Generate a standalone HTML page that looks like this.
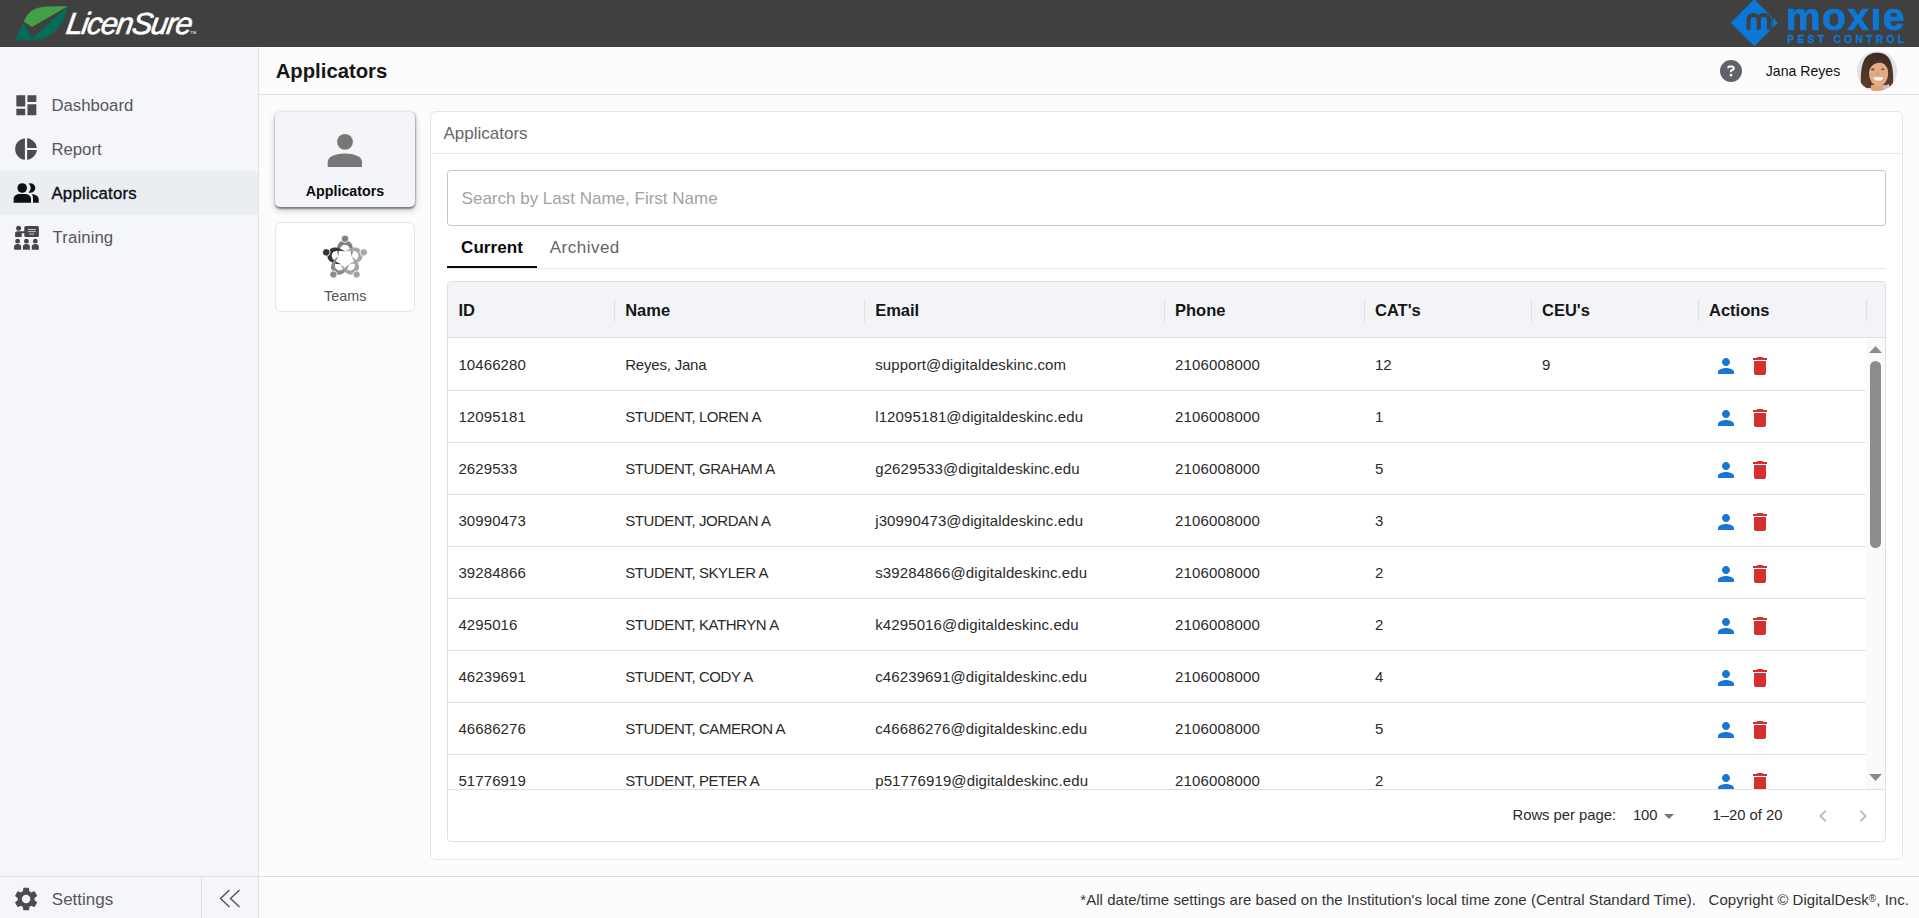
<!DOCTYPE html>
<html><head><meta charset="utf-8"><title>Applicators</title>
<style>
html,body{margin:0;padding:0}
body{width:1919px;height:918px;overflow:hidden;position:relative;background:#fcfcfc;font-family:"Liberation Sans",sans-serif}
.a{position:absolute}
.t{position:absolute;line-height:1;white-space:nowrap}
svg.a{overflow:visible}
</style></head><body>
<div class="a" style="left:0px;top:0px;width:1919px;height:47px;background:#404040"></div>
<svg class="a" style="left:0px;top:0px" width="260" height="46" viewBox="0 0 260 46">
<path d="M67.6 6.2 C52 6.2 42 6.3 36 8.5 C30 10.8 26 16 23.7 21.5 L32 27 Z" fill="#43a047"/>
<path d="M15 39.8 L23.5 22.6 L32.2 38.5 L67.6 6.4 C65 17 61 26 54 32 C47 38 40 39.7 35 39.7 Z" fill="#006e5a"/>
</svg>
<div class="t" style="left:65px;top:8.00px;font-size:30.5px;color:#fff;font-weight:normal;letter-spacing:-1.4px;font-style:italic;-webkit-text-stroke:0.6px #fff;transform:skewX(-9deg);transform-origin:0 26px;">LicenSure</div>
<div class="t" style="left:190.3px;top:31.00px;font-size:4.2px;color:#fff;font-weight:normal;letter-spacing:0px;">TM</div>
<svg class="a" style="left:1700px;top:0px" width="219" height="46" viewBox="1700 0 219 46">
<path d="M1754.3 -0.8 L1777.8 22.75 L1754.3 46.3 L1730.8 22.75 Z" fill="#0b78d8"/>
<path d="M1746.5 29.8 V20 C1746.5 15.5 1749.5 13 1753.5 13 C1755.5 13 1757.5 13.8 1758.6 15.2 C1759.8 13.8 1761.8 13 1764 13 C1768.2 13 1771 15.5 1771 20 V29.8 H1767 V20.5 C1767 18 1765.8 17 1764 17 C1762.2 17 1760.8 18 1760.8 20.5 V29.8 H1756.7 V20.5 C1756.7 18 1755.5 17 1753.7 17 C1751.9 17 1750.6 18 1750.6 20.5 V29.8 Z" fill="#404040"/>
<path d="M1771.5 16.5 L1772.8 16.5 L1772.8 29 L1771.5 30" fill="#404040"/>
</svg>
<div class="t" style="left:1786px;top:-3.00px;font-size:39px;color:#0b78d8;font-weight:bold;letter-spacing:1.5px;-webkit-text-stroke:0.7px #0b78d8;">mox&#x131;e</div>
<div class="t" style="left:1787.3px;top:35.00px;font-size:10.2px;color:#0b78d8;font-weight:bold;letter-spacing:3.35px;-webkit-text-stroke:0.3px #0b78d8;">PEST CONTROL</div>
<div class="a" style="left:0px;top:47px;width:258px;height:871px;background:#f5f6fa"></div>
<div class="a" style="left:0px;top:171px;width:258px;height:44px;background:#eaedf2;border-radius:4px"></div>
<svg class="a" style="left:12.7px;top:92px" width="26.7" height="26.7" viewBox="0 0 24 24"><path d="M3 13h8V3H3zm0 8h8v-6H3zm10 0h8V11h-8zm0-18v6h8V3z" fill="#4a4c52"/></svg>
<div class="t" style="left:51.4px;top:98.00px;font-size:16.75px;color:#55575c;font-weight:normal;letter-spacing:0px;">Dashboard</div>
<svg class="a" style="left:13.1px;top:135.6px" width="26" height="26" viewBox="0 0 24 24"><path d="M11 2v20c-5.07-.5-9-4.79-9-10s3.93-9.5 9-10m2.03 0v8.99H22c-.47-4.74-4.24-8.52-8.97-8.99m0 11.01V22c4.74-.47 8.5-4.25 8.97-8.99z" fill="#4a4c52"/></svg>
<div class="t" style="left:51.4px;top:142.00px;font-size:16.75px;color:#55575c;font-weight:normal;letter-spacing:0px;">Report</div>
<svg class="a" style="left:0px;top:170px" width="50" height="45" viewBox="0 170 50 45"><g fill="#0d0f14">
<circle cx="22.2" cy="188" r="4.8"/>
<path d="M28.6 183.6 A4.8 4.8 0 1 1 28.6 192.4 A5.6 5.6 0 0 0 28.6 183.6 Z"/>
<path d="M13.6 202.7 V199.2 C13.6 196.2 16 194.1 19.5 194.1 H25 C28.5 194.1 31 196.2 31 199.2 V202.7 Z"/>
<path d="M32.1 194.1 C36 194.6 38.7 196.6 38.7 199.2 V202.7 H33 V199.2 C33 197.2 32.7 195.5 32.1 194.1 Z"/>
</g></svg>
<div class="t" style="left:51.4px;top:186.00px;font-size:16.75px;color:#0d0f14;font-weight:normal;letter-spacing:0.25px;-webkit-text-stroke:0.35px #0d0f14;">Applicators</div>
<svg class="a" style="left:0px;top:215px" width="50" height="40" viewBox="0 215 50 40">
<g fill="#46464a">
<circle cx="18.6" cy="228.3" r="2.5"/>
<path d="M15.1 236.9 V233 C15.1 231.9 16 231.2 17.2 231.2 H26.8 V233.2 H21.7 V236.9 Z"/>
<rect x="24.3" y="226" width="14.6" height="11" rx="1.6"/>
<circle cx="17.6" cy="241.2" r="2.4"/><path d="M14.1 249.7 V246.3 C14.1 244.8 15.5 243.9 17.6 243.9 C19.7 243.9 21.1 244.8 21.1 246.3 V249.7 Z"/>
<circle cx="26.4" cy="241.2" r="2.4"/><path d="M22.9 249.7 V246.3 C22.9 244.8 24.3 243.9 26.4 243.9 C28.5 243.9 29.9 244.8 29.9 246.3 V249.7 Z"/>
<circle cx="35.3" cy="241.2" r="2.4"/><path d="M31.8 249.7 V246.3 C31.8 244.8 33.2 243.9 35.3 243.9 C37.4 243.9 38.8 244.8 38.8 246.3 V249.7 Z"/>
</g>
<rect x="28" y="229" width="7.8" height="0.9" fill="#d8d8dc"/>
<rect x="28" y="231.2" width="7.8" height="0.9" fill="#d8d8dc"/>
<rect x="29.2" y="233.3" width="4.8" height="1.6" fill="#9a9a9e"/>
</svg>
<div class="t" style="left:52.6px;top:230.00px;font-size:16.75px;color:#55575c;font-weight:normal;letter-spacing:0.1px;">Training</div>
<div class="a" style="left:0px;top:876px;width:1919px;height:1px;background:#dfdfdc"></div>
<div class="a" style="left:201px;top:877px;width:1px;height:41px;background:#e0e0e0"></div>
<div class="a" style="left:258px;top:47px;width:1px;height:871px;background:#dfe2ec"></div>
<svg class="a" style="left:11.8px;top:884.8px" width="28.2" height="28.2" viewBox="0 0 24 24"><path d="M19.14 12.94c.04-.3.06-.61.06-.94 0-.32-.02-.64-.07-.94l2.03-1.58c.18-.14.23-.41.12-.61l-1.92-3.32c-.12-.22-.37-.29-.59-.22l-2.39.96c-.5-.38-1.03-.7-1.62-.94l-.36-2.54c-.04-.24-.24-.41-.48-.41h-3.84c-.24 0-.43.17-.47.41l-.36 2.54c-.59.24-1.13.57-1.62.94l-2.39-.96c-.22-.08-.47 0-.59.22L2.74 8.87c-.12.21-.08.47.12.61l2.03 1.58c-.05.3-.09.63-.09.94s.02.64.07.94l-2.03 1.58c-.18.14-.23.41-.12.61l1.92 3.32c.12.22.37.29.59.22l2.39-.96c.5.38 1.03.7 1.62.94l.36 2.54c.05.24.24.41.48.41h3.84c.24 0 .44-.17.47-.41l.36-2.54c.59-.24 1.13-.56 1.62-.94l2.39.96c.22.08.47 0 .59-.22l1.92-3.32c.12-.22.07-.47-.12-.61zM12 15.6c-1.98 0-3.6-1.62-3.6-3.6s1.62-3.6 3.6-3.6 3.6 1.62 3.6 3.6-1.62 3.6-3.6 3.6" fill="#4a4c52"/></svg>
<div class="t" style="left:51.8px;top:891.00px;font-size:17px;color:#55575c;font-weight:normal;letter-spacing:0px;">Settings</div>
<svg class="a" style="left:215px;top:885px" width="30" height="26" viewBox="215 885 30 26">
<polyline points="229.5,890 220.5,898.5 229.5,907" fill="none" stroke="#55575c" stroke-width="1.5"/>
<polyline points="239.5,890 230.5,898.5 239.5,907" fill="none" stroke="#55575c" stroke-width="1.5"/>
</svg>
<div class="a" style="left:259px;top:94px;width:1660px;height:1px;background:#e0e0e0"></div>
<div class="t" style="left:275.7px;top:61.00px;font-size:20.3px;color:#161616;font-weight:bold;letter-spacing:0px;">Applicators</div>
<svg class="a" style="left:1720.3px;top:59.9px" width="22" height="22" viewBox="0 0 512 512"><path d="M256 512A256 256 0 1 0 256 0a256 256 0 1 0 0 512zM169.8 165.3c7.9-22.3 29.1-37.3 52.8-37.3h58.3c34.9 0 63.1 28.3 63.1 63.1c0 22.6-12.1 43.5-31.7 54.8L280 264.4c-.2 13-10.9 23.6-24 23.6c-13.3 0-24-10.7-24-24V250.5c0-8.6 4.6-16.5 12.1-20.8l44.3-25.4c4.7-2.7 7.6-7.7 7.6-13.1c0-8.4-6.8-15.100-15.1-15.1H222.6c-3.4 0-6.4 2.1-7.5 5.3l-.4 1.2c-4.4 12.5-18.2 19-30.6 14.6s-19-18.2-14.6-30.6l.4-1.2zM224 352a32 32 0 1 1 64 0 32 32 0 1 1 -64 0z" fill="#5f6368"/></svg>
<div class="t" style="left:1765.8px;top:64.00px;font-size:14.1px;color:#111;font-weight:normal;letter-spacing:0px;">Jana Reyes</div>
<svg class="a" style="left:1856px;top:50px" width="42" height="42" viewBox="0 0 42 42">
<defs><clipPath id="cc"><circle cx="21" cy="21" r="20"/></clipPath>
<linearGradient id="hg" x1="0" y1="0" x2="0" y2="1"><stop offset="0" stop-color="#3f2a24"/><stop offset="1" stop-color="#5e3e2c"/></linearGradient></defs>
<circle cx="21" cy="21" r="20" fill="#e3e3e3"/>
<g clip-path="url(#cc)">
<path d="M3 30 Q6 40 21 42 Q36 40 39 30 V42 H3Z" fill="#f8f8f8"/>
<path d="M5 34 C4.5 26 5 15 9 8.5 C12 4 17 2.8 21.5 2.8 C27 2.8 31.5 5 34 10 C37 16 37.5 26 37 34 C36 37 34 38 32 37 L13 38 C9 39 6 37 5 34Z" fill="url(#hg)"/>
<path d="M15 35 H30 V42 H15Z" fill="#e0a379"/>
<path d="M27 36 L33 34 L35 42 H27Z" fill="#b9c0d8"/>
<ellipse cx="22.6" cy="23.5" rx="9.6" ry="12.6" fill="#e4ab82"/>
<path d="M12.6 22 C12 13 15.5 8.5 22 8.5 C28.5 8.5 33 12 32.8 21 C31 15 27 12.5 23 12.8 C18 13 14.5 16 12.6 22Z" fill="#46302a"/>
<ellipse cx="16.8" cy="19.5" rx="1.7" ry="0.9" fill="#5b4652"/>
<ellipse cx="26.8" cy="19.3" rx="1.7" ry="0.9" fill="#5b4652"/>
<path d="M17.3 27.4 Q22.2 26.6 27.2 27.4 Q26.5 30.6 22.2 30.6 Q18 30.6 17.3 27.4Z" fill="#fbf4f0"/>
<path d="M21.5 21 L20.8 25 H23.5Z" fill="#d39a72"/>
</g>
</svg>
<div class="a" style="left:275px;top:111.5px;width:140px;height:95.5px;background:#f4f5f9;border-radius:5px;box-shadow:0 1.5px 2px rgba(0,0,0,0.4),0 3px 7px rgba(0,0,0,0.22),1px 0 2px rgba(0,0,0,0.15)"></div>
<svg class="a" style="left:320px;top:125px" width="50" height="50" viewBox="320 125 50 50"><circle cx="345" cy="141.8" r="7.9" fill="#777"/><path d="M327.7 167 V162 C327.7 156.5 336 153.6 345 153.6 C354 153.6 362 156.5 362 162 V167 Z" fill="#777"/></svg>
<div class="t" style="left:305.8px;top:184.00px;font-size:14.25px;color:#0a0a0a;font-weight:bold;letter-spacing:0px;">Applicators</div>
<div class="a" style="left:275px;top:222px;width:140px;height:90px;background:#fff;border:1px solid #e6e6e6;box-sizing:border-box;border-radius:6px"></div>
<svg class="a" style="left:318px;top:232px" width="54" height="52" viewBox="318 232 54 52"><g transform="translate(345 258.5) scale(1.04) translate(-345 -258)">
<g transform="rotate(0 345 258)"><path d="M338.6 256 C336 249 337 240.6 345 240.6 C353 240.6 354 249 351.4 256 C350.6 250.5 349.6 244.8 345 244.8 C340.4 244.8 339.4 250.5 338.6 256 Z" fill="#7f7f7f"/><circle cx="345" cy="239" r="3.5" fill="#7f7f7f" stroke="#fff" stroke-width="0.8"/></g>
<g transform="rotate(-72 345 258)"><path d="M338.6 256 C336 249 337 240.6 345 240.6 C353 240.6 354 249 351.4 256 C350.6 250.5 349.6 244.8 345 244.8 C340.4 244.8 339.4 250.5 338.6 256 Z" fill="#353535"/><circle cx="345" cy="239" r="3.5" fill="#353535" stroke="#fff" stroke-width="0.8"/></g>
<g transform="rotate(72 345 258)"><path d="M338.6 256 C336 249 337 240.6 345 240.6 C353 240.6 354 249 351.4 256 C350.6 250.5 349.6 244.8 345 244.8 C340.4 244.8 339.4 250.5 338.6 256 Z" fill="#a9a9a9"/><circle cx="345" cy="239" r="3.5" fill="#a9a9a9" stroke="#fff" stroke-width="0.8"/></g>
<g transform="rotate(-144 345 258)"><path d="M338.6 256 C336 249 337 240.6 345 240.6 C353 240.6 354 249 351.4 256 C350.6 250.5 349.6 244.8 345 244.8 C340.4 244.8 339.4 250.5 338.6 256 Z" fill="#8a8a8a"/><circle cx="345" cy="239" r="3.5" fill="#8a8a8a" stroke="#fff" stroke-width="0.8"/></g>
<g transform="rotate(144 345 258)"><path d="M338.6 256 C336 249 337 240.6 345 240.6 C353 240.6 354 249 351.4 256 C350.6 250.5 349.6 244.8 345 244.8 C340.4 244.8 339.4 250.5 338.6 256 Z" fill="#a3a3a3"/><circle cx="345" cy="239" r="3.5" fill="#a3a3a3" stroke="#fff" stroke-width="0.8"/></g>
</g></svg>
<div class="t" style="left:324px;top:289.00px;font-size:14.4px;color:#555;font-weight:normal;letter-spacing:0px;">Teams</div>
<div class="a" style="left:430px;top:111px;width:1473px;height:749px;background:#fff;border:1px solid #e6e6e6;box-sizing:border-box;border-radius:6px"></div>
<div class="a" style="left:431px;top:153px;width:1471px;height:1px;background:#e6e6e6"></div>
<div class="t" style="left:443.5px;top:125.00px;font-size:17px;color:#666;font-weight:normal;letter-spacing:0px;">Applicators</div>
<div class="a" style="left:447px;top:170px;width:1439px;height:56px;border:1px solid #c4c4c4;box-sizing:border-box;border-radius:3.5px;background:#fff"></div>
<div class="t" style="left:461.6px;top:190.00px;font-size:17px;color:#a2a2a2;font-weight:normal;letter-spacing:0px;">Search by Last Name, First Name</div>
<div class="t" style="left:461px;top:239.00px;font-size:17px;color:#0a0a0a;font-weight:bold;letter-spacing:0.1px;">Current</div>
<div class="t" style="left:549.7px;top:239.00px;font-size:17px;color:#666;font-weight:normal;letter-spacing:0.5px;">Archived</div>
<div class="a" style="left:447px;top:268px;width:1439px;height:1px;background:#e6e6e6"></div>
<div class="a" style="left:447px;top:266px;width:90px;height:2px;background:#0a0a0a"></div>
<div class="a" style="left:447px;top:281px;width:1439px;height:561px;border:1px solid #e0e0e0;box-sizing:border-box;border-radius:4px;background:#fff"></div>
<div class="a" style="left:448px;top:282px;width:1437px;height:55px;background:#f3f4f8;border-radius:3px 3px 0 0"></div>
<div class="a" style="left:448px;top:337px;width:1437px;height:1px;background:#e0e0e0"></div>
<div class="t" style="left:458.4px;top:302.00px;font-size:16.5px;color:#161616;font-weight:bold;letter-spacing:0px;">ID</div>
<div class="t" style="left:625.2px;top:302.00px;font-size:16.5px;color:#161616;font-weight:bold;letter-spacing:0px;">Name</div>
<div class="t" style="left:875.2px;top:302.00px;font-size:16.5px;color:#161616;font-weight:bold;letter-spacing:0px;">Email</div>
<div class="t" style="left:1175px;top:302.00px;font-size:16.5px;color:#161616;font-weight:bold;letter-spacing:0px;">Phone</div>
<div class="t" style="left:1375px;top:302.00px;font-size:16.5px;color:#161616;font-weight:bold;letter-spacing:0px;">CAT's</div>
<div class="t" style="left:1542px;top:302.00px;font-size:16.5px;color:#161616;font-weight:bold;letter-spacing:0px;">CEU's</div>
<div class="t" style="left:1709px;top:302.00px;font-size:16.5px;color:#161616;font-weight:bold;letter-spacing:0px;">Actions</div>
<div class="a" style="left:614.25px;top:298.5px;width:1px;height:23.5px;background:#e0e0e4"></div>
<div class="a" style="left:864.25px;top:298.5px;width:1px;height:23.5px;background:#e0e0e4"></div>
<div class="a" style="left:1164.25px;top:298.5px;width:1px;height:23.5px;background:#e0e0e4"></div>
<div class="a" style="left:1364.25px;top:298.5px;width:1px;height:23.5px;background:#e0e0e4"></div>
<div class="a" style="left:1530.5px;top:298.5px;width:1px;height:23.5px;background:#e0e0e4"></div>
<div class="a" style="left:1698.0px;top:298.5px;width:1px;height:23.5px;background:#e0e0e4"></div>
<div class="a" style="left:1865.5px;top:298.5px;width:1px;height:23.5px;background:#e0e0e4"></div>
<div class="a" style="left:448px;top:338px;width:1437px;height:451px;overflow:hidden">
<div class="t" style="left:10.399999999999977px;top:19.00px;font-size:15px;color:#2a2a2a;font-weight:normal;letter-spacing:0.1px;">10466280</div>
<div class="t" style="left:177.20000000000005px;top:19.00px;font-size:15px;color:#2a2a2a;font-weight:normal;letter-spacing:-0.2px;">Reyes, Jana</div>
<div class="t" style="left:427.20000000000005px;top:19.00px;font-size:15px;color:#2a2a2a;font-weight:normal;letter-spacing:0.12px;">support@digitaldeskinc.com</div>
<div class="t" style="left:727px;top:19.00px;font-size:15px;color:#2a2a2a;font-weight:normal;letter-spacing:0.15px;">2106008000</div>
<div class="t" style="left:927px;top:19.00px;font-size:15px;color:#2a2a2a;font-weight:normal;letter-spacing:0px;">12</div>
<div class="t" style="left:1094px;top:19.00px;font-size:15px;color:#2a2a2a;font-weight:normal;letter-spacing:0px;">9</div>
<svg class="a" style="left:1266px;top:16px" width="24" height="24" viewBox="0 0 24 24"><path d="M12 12c2.21 0 4-1.79 4-4s-1.79-4-4-4-4 1.79-4 4 1.79 4 4 4m0 2c-2.67 0-8 1.34-8 4v2h16v-2c0-2.66-5.33-4-8-4" fill="#1976d2"/></svg>
<svg class="a" style="left:1300px;top:16px" width="24" height="24" viewBox="0 0 24 24"><path d="M6 19c0 1.1.9 2 2 2h8c1.1 0 2-.9 2-2V7H6zM19 4h-3.5l-1-1h-5l-1 1H5v2h14z" fill="#d32f2f"/></svg>
<div class="a" style="left:0px;top:52px;width:1418px;height:1px;background:#e0e0e0"></div>
<div class="t" style="left:10.399999999999977px;top:71.00px;font-size:15px;color:#2a2a2a;font-weight:normal;letter-spacing:0.1px;">12095181</div>
<div class="t" style="left:177.20000000000005px;top:71.00px;font-size:15px;color:#2a2a2a;font-weight:normal;letter-spacing:-0.42px;">STUDENT, LOREN A</div>
<div class="t" style="left:427.20000000000005px;top:71.00px;font-size:15px;color:#2a2a2a;font-weight:normal;letter-spacing:0.12px;">l12095181@digitaldeskinc.edu</div>
<div class="t" style="left:727px;top:71.00px;font-size:15px;color:#2a2a2a;font-weight:normal;letter-spacing:0.15px;">2106008000</div>
<div class="t" style="left:927px;top:71.00px;font-size:15px;color:#2a2a2a;font-weight:normal;letter-spacing:0px;">1</div>
<svg class="a" style="left:1266px;top:68px" width="24" height="24" viewBox="0 0 24 24"><path d="M12 12c2.21 0 4-1.79 4-4s-1.79-4-4-4-4 1.79-4 4 1.79 4 4 4m0 2c-2.67 0-8 1.34-8 4v2h16v-2c0-2.66-5.33-4-8-4" fill="#1976d2"/></svg>
<svg class="a" style="left:1300px;top:68px" width="24" height="24" viewBox="0 0 24 24"><path d="M6 19c0 1.1.9 2 2 2h8c1.1 0 2-.9 2-2V7H6zM19 4h-3.5l-1-1h-5l-1 1H5v2h14z" fill="#d32f2f"/></svg>
<div class="a" style="left:0px;top:104px;width:1418px;height:1px;background:#e0e0e0"></div>
<div class="t" style="left:10.399999999999977px;top:123.00px;font-size:15px;color:#2a2a2a;font-weight:normal;letter-spacing:0.1px;">2629533</div>
<div class="t" style="left:177.20000000000005px;top:123.00px;font-size:15px;color:#2a2a2a;font-weight:normal;letter-spacing:-0.42px;">STUDENT, GRAHAM A</div>
<div class="t" style="left:427.20000000000005px;top:123.00px;font-size:15px;color:#2a2a2a;font-weight:normal;letter-spacing:0.12px;">g2629533@digitaldeskinc.edu</div>
<div class="t" style="left:727px;top:123.00px;font-size:15px;color:#2a2a2a;font-weight:normal;letter-spacing:0.15px;">2106008000</div>
<div class="t" style="left:927px;top:123.00px;font-size:15px;color:#2a2a2a;font-weight:normal;letter-spacing:0px;">5</div>
<svg class="a" style="left:1266px;top:120px" width="24" height="24" viewBox="0 0 24 24"><path d="M12 12c2.21 0 4-1.79 4-4s-1.79-4-4-4-4 1.79-4 4 1.79 4 4 4m0 2c-2.67 0-8 1.34-8 4v2h16v-2c0-2.66-5.33-4-8-4" fill="#1976d2"/></svg>
<svg class="a" style="left:1300px;top:120px" width="24" height="24" viewBox="0 0 24 24"><path d="M6 19c0 1.1.9 2 2 2h8c1.1 0 2-.9 2-2V7H6zM19 4h-3.5l-1-1h-5l-1 1H5v2h14z" fill="#d32f2f"/></svg>
<div class="a" style="left:0px;top:156px;width:1418px;height:1px;background:#e0e0e0"></div>
<div class="t" style="left:10.399999999999977px;top:175.00px;font-size:15px;color:#2a2a2a;font-weight:normal;letter-spacing:0.1px;">30990473</div>
<div class="t" style="left:177.20000000000005px;top:175.00px;font-size:15px;color:#2a2a2a;font-weight:normal;letter-spacing:-0.42px;">STUDENT, JORDAN A</div>
<div class="t" style="left:427.20000000000005px;top:175.00px;font-size:15px;color:#2a2a2a;font-weight:normal;letter-spacing:0.12px;">j30990473@digitaldeskinc.edu</div>
<div class="t" style="left:727px;top:175.00px;font-size:15px;color:#2a2a2a;font-weight:normal;letter-spacing:0.15px;">2106008000</div>
<div class="t" style="left:927px;top:175.00px;font-size:15px;color:#2a2a2a;font-weight:normal;letter-spacing:0px;">3</div>
<svg class="a" style="left:1266px;top:172px" width="24" height="24" viewBox="0 0 24 24"><path d="M12 12c2.21 0 4-1.79 4-4s-1.79-4-4-4-4 1.79-4 4 1.79 4 4 4m0 2c-2.67 0-8 1.34-8 4v2h16v-2c0-2.66-5.33-4-8-4" fill="#1976d2"/></svg>
<svg class="a" style="left:1300px;top:172px" width="24" height="24" viewBox="0 0 24 24"><path d="M6 19c0 1.1.9 2 2 2h8c1.1 0 2-.9 2-2V7H6zM19 4h-3.5l-1-1h-5l-1 1H5v2h14z" fill="#d32f2f"/></svg>
<div class="a" style="left:0px;top:208px;width:1418px;height:1px;background:#e0e0e0"></div>
<div class="t" style="left:10.399999999999977px;top:227.00px;font-size:15px;color:#2a2a2a;font-weight:normal;letter-spacing:0.1px;">39284866</div>
<div class="t" style="left:177.20000000000005px;top:227.00px;font-size:15px;color:#2a2a2a;font-weight:normal;letter-spacing:-0.42px;">STUDENT, SKYLER A</div>
<div class="t" style="left:427.20000000000005px;top:227.00px;font-size:15px;color:#2a2a2a;font-weight:normal;letter-spacing:0.12px;">s39284866@digitaldeskinc.edu</div>
<div class="t" style="left:727px;top:227.00px;font-size:15px;color:#2a2a2a;font-weight:normal;letter-spacing:0.15px;">2106008000</div>
<div class="t" style="left:927px;top:227.00px;font-size:15px;color:#2a2a2a;font-weight:normal;letter-spacing:0px;">2</div>
<svg class="a" style="left:1266px;top:224px" width="24" height="24" viewBox="0 0 24 24"><path d="M12 12c2.21 0 4-1.79 4-4s-1.79-4-4-4-4 1.79-4 4 1.79 4 4 4m0 2c-2.67 0-8 1.34-8 4v2h16v-2c0-2.66-5.33-4-8-4" fill="#1976d2"/></svg>
<svg class="a" style="left:1300px;top:224px" width="24" height="24" viewBox="0 0 24 24"><path d="M6 19c0 1.1.9 2 2 2h8c1.1 0 2-.9 2-2V7H6zM19 4h-3.5l-1-1h-5l-1 1H5v2h14z" fill="#d32f2f"/></svg>
<div class="a" style="left:0px;top:260px;width:1418px;height:1px;background:#e0e0e0"></div>
<div class="t" style="left:10.399999999999977px;top:279.00px;font-size:15px;color:#2a2a2a;font-weight:normal;letter-spacing:0.1px;">4295016</div>
<div class="t" style="left:177.20000000000005px;top:279.00px;font-size:15px;color:#2a2a2a;font-weight:normal;letter-spacing:-0.42px;">STUDENT, KATHRYN A</div>
<div class="t" style="left:427.20000000000005px;top:279.00px;font-size:15px;color:#2a2a2a;font-weight:normal;letter-spacing:0.12px;">k4295016@digitaldeskinc.edu</div>
<div class="t" style="left:727px;top:279.00px;font-size:15px;color:#2a2a2a;font-weight:normal;letter-spacing:0.15px;">2106008000</div>
<div class="t" style="left:927px;top:279.00px;font-size:15px;color:#2a2a2a;font-weight:normal;letter-spacing:0px;">2</div>
<svg class="a" style="left:1266px;top:276px" width="24" height="24" viewBox="0 0 24 24"><path d="M12 12c2.21 0 4-1.79 4-4s-1.79-4-4-4-4 1.79-4 4 1.79 4 4 4m0 2c-2.67 0-8 1.34-8 4v2h16v-2c0-2.66-5.33-4-8-4" fill="#1976d2"/></svg>
<svg class="a" style="left:1300px;top:276px" width="24" height="24" viewBox="0 0 24 24"><path d="M6 19c0 1.1.9 2 2 2h8c1.1 0 2-.9 2-2V7H6zM19 4h-3.5l-1-1h-5l-1 1H5v2h14z" fill="#d32f2f"/></svg>
<div class="a" style="left:0px;top:312px;width:1418px;height:1px;background:#e0e0e0"></div>
<div class="t" style="left:10.399999999999977px;top:331.00px;font-size:15px;color:#2a2a2a;font-weight:normal;letter-spacing:0.1px;">46239691</div>
<div class="t" style="left:177.20000000000005px;top:331.00px;font-size:15px;color:#2a2a2a;font-weight:normal;letter-spacing:-0.42px;">STUDENT, CODY A</div>
<div class="t" style="left:427.20000000000005px;top:331.00px;font-size:15px;color:#2a2a2a;font-weight:normal;letter-spacing:0.12px;">c46239691@digitaldeskinc.edu</div>
<div class="t" style="left:727px;top:331.00px;font-size:15px;color:#2a2a2a;font-weight:normal;letter-spacing:0.15px;">2106008000</div>
<div class="t" style="left:927px;top:331.00px;font-size:15px;color:#2a2a2a;font-weight:normal;letter-spacing:0px;">4</div>
<svg class="a" style="left:1266px;top:328px" width="24" height="24" viewBox="0 0 24 24"><path d="M12 12c2.21 0 4-1.79 4-4s-1.79-4-4-4-4 1.79-4 4 1.79 4 4 4m0 2c-2.67 0-8 1.34-8 4v2h16v-2c0-2.66-5.33-4-8-4" fill="#1976d2"/></svg>
<svg class="a" style="left:1300px;top:328px" width="24" height="24" viewBox="0 0 24 24"><path d="M6 19c0 1.1.9 2 2 2h8c1.1 0 2-.9 2-2V7H6zM19 4h-3.5l-1-1h-5l-1 1H5v2h14z" fill="#d32f2f"/></svg>
<div class="a" style="left:0px;top:364px;width:1418px;height:1px;background:#e0e0e0"></div>
<div class="t" style="left:10.399999999999977px;top:383.00px;font-size:15px;color:#2a2a2a;font-weight:normal;letter-spacing:0.1px;">46686276</div>
<div class="t" style="left:177.20000000000005px;top:383.00px;font-size:15px;color:#2a2a2a;font-weight:normal;letter-spacing:-0.42px;">STUDENT, CAMERON A</div>
<div class="t" style="left:427.20000000000005px;top:383.00px;font-size:15px;color:#2a2a2a;font-weight:normal;letter-spacing:0.12px;">c46686276@digitaldeskinc.edu</div>
<div class="t" style="left:727px;top:383.00px;font-size:15px;color:#2a2a2a;font-weight:normal;letter-spacing:0.15px;">2106008000</div>
<div class="t" style="left:927px;top:383.00px;font-size:15px;color:#2a2a2a;font-weight:normal;letter-spacing:0px;">5</div>
<svg class="a" style="left:1266px;top:380px" width="24" height="24" viewBox="0 0 24 24"><path d="M12 12c2.21 0 4-1.79 4-4s-1.79-4-4-4-4 1.79-4 4 1.79 4 4 4m0 2c-2.67 0-8 1.34-8 4v2h16v-2c0-2.66-5.33-4-8-4" fill="#1976d2"/></svg>
<svg class="a" style="left:1300px;top:380px" width="24" height="24" viewBox="0 0 24 24"><path d="M6 19c0 1.1.9 2 2 2h8c1.1 0 2-.9 2-2V7H6zM19 4h-3.5l-1-1h-5l-1 1H5v2h14z" fill="#d32f2f"/></svg>
<div class="a" style="left:0px;top:416px;width:1418px;height:1px;background:#e0e0e0"></div>
<div class="t" style="left:10.399999999999977px;top:435.00px;font-size:15px;color:#2a2a2a;font-weight:normal;letter-spacing:0.1px;">51776919</div>
<div class="t" style="left:177.20000000000005px;top:435.00px;font-size:15px;color:#2a2a2a;font-weight:normal;letter-spacing:-0.42px;">STUDENT, PETER A</div>
<div class="t" style="left:427.20000000000005px;top:435.00px;font-size:15px;color:#2a2a2a;font-weight:normal;letter-spacing:0.12px;">p51776919@digitaldeskinc.edu</div>
<div class="t" style="left:727px;top:435.00px;font-size:15px;color:#2a2a2a;font-weight:normal;letter-spacing:0.15px;">2106008000</div>
<div class="t" style="left:927px;top:435.00px;font-size:15px;color:#2a2a2a;font-weight:normal;letter-spacing:0px;">2</div>
<svg class="a" style="left:1266px;top:432px" width="24" height="24" viewBox="0 0 24 24"><path d="M12 12c2.21 0 4-1.79 4-4s-1.79-4-4-4-4 1.79-4 4 1.79 4 4 4m0 2c-2.67 0-8 1.34-8 4v2h16v-2c0-2.66-5.33-4-8-4" fill="#1976d2"/></svg>
<svg class="a" style="left:1300px;top:432px" width="24" height="24" viewBox="0 0 24 24"><path d="M6 19c0 1.1.9 2 2 2h8c1.1 0 2-.9 2-2V7H6zM19 4h-3.5l-1-1h-5l-1 1H5v2h14z" fill="#d32f2f"/></svg>
<div class="a" style="left:0px;top:468px;width:1418px;height:1px;background:#e0e0e0"></div>
<div class="a" style="left:1418px;top:0px;width:19px;height:451px;background:#fafafa"></div>
</div>
<svg class="a" style="left:1866px;top:338px" width="19" height="451" viewBox="1866 338 19 451">
<path d="M1869 353 L1875.5 346 L1882 353 Z" fill="#8c8c8c"/>
<rect x="1870" y="361" width="11" height="187" rx="5.5" fill="#8c8c8c"/>
<path d="M1869 774 L1875.5 781 L1882 774 Z" fill="#8c8c8c"/>
</svg>
<div class="a" style="left:448px;top:789px;width:1437px;height:1px;background:#e0e0e0"></div>
<div class="t" style="left:1512.5px;top:808.00px;font-size:14.8px;color:#2a2a2a;font-weight:normal;letter-spacing:0px;">Rows per page:</div>
<div class="t" style="left:1632.9px;top:808.00px;font-size:14.8px;color:#2a2a2a;font-weight:normal;letter-spacing:0px;">100</div>
<svg class="a" style="left:1660px;top:810px" width="18" height="14" viewBox="1660 810 18 14"><path d="M1664 814 L1669 819 L1674 814 Z" fill="#757575"/></svg>
<div class="t" style="left:1712.6px;top:808.00px;font-size:14.8px;color:#2a2a2a;font-weight:normal;letter-spacing:0px;">1&ndash;20 of 20</div>
<svg class="a" style="left:1811px;top:804px" width="24" height="24" viewBox="0 0 24 24"><path d="M15.41 16.59 10.83 12l4.58-4.59L14 6l-6 6 6 6z" fill="#bdbdbd"/></svg>
<svg class="a" style="left:1851.4px;top:804px" width="24" height="24" viewBox="0 0 24 24"><path d="M8.59 16.59 13.17 12 8.59 7.41 10 6l6 6-6 6z" fill="#bdbdbd"/></svg>
<div class="t" style="right:10px;top:892.00px;font-size:15px;color:#333;font-weight:normal;letter-spacing:0.035px;">*All date/time settings are based on the Institution's local time zone (Central Standard Time).&nbsp;&nbsp; Copyright &copy; DigitalDesk<span style="font-size:10px;vertical-align:3px">&reg;</span>, Inc.</div>

</body></html>
